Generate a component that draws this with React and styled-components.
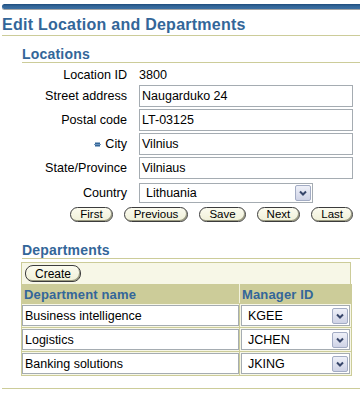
import React from 'react';
import styled, { createGlobalStyle } from 'styled-components';

const Global = createGlobalStyle`
  html, body { margin: 0; padding: 0; background: #ffffff; }
  body { font-family: "Liberation Sans", Arial, sans-serif; color: #000; }
  * { box-sizing: border-box; }
`;

const Page = styled.div`
  width: 360px;
  height: 394px;
  overflow: hidden;
  padding-top: 4px;
`;

const Brand = styled.div`
  margin-left: 2px;
  height: 5px;
  background: linear-gradient(#1e4c7c, #336699 45%, #3b6fa2);
  border-radius: 3px 0 0 3px;
  box-shadow: 0 1px 0 #a4a4a4;
`;

const Title = styled.h1`
  margin: 6px 0 0 2px;
  font-size: 16px;
  line-height: 20px;
  font-weight: bold;
  color: #336699;
  letter-spacing: 0.25px;
  white-space: nowrap;
  border-bottom: 1px solid #cccc99;
`;

const SectionHeader = styled.h2`
  margin: ${p => p.$top}px 0 0 22px;
  font-size: 14px;
  line-height: 16px;
  font-weight: bold;
  color: #336699;
  letter-spacing: 0.2px;
  border-bottom: 1px solid #cccc99;
`;

const Form = styled.div`
  display: grid;
  grid-template-columns: 127px 214px;
  column-gap: 12px;
  row-gap: 2px;
  margin-top: 4px;
  align-items: center;
`;

const Label = styled.div`
  display: flex;
  justify-content: flex-end;
  align-items: center;
  gap: 4px;
  font-size: 12.6px;
  height: ${p => p.$h || 22}px;
  margin-top: ${p => p.$mt || 0}px;
  white-space: nowrap;
`;

const Value = styled.div`
  font-size: 12.6px;
  height: ${p => p.$h || 22}px;
  display: flex;
  align-items: center;
`;

const TextInput = styled.div`
  width: 100%;
  height: ${p => p.$h || 22}px;
  border: 1px solid #a5acb2;
  background: #fff;
  padding: 0 2px;
  font-size: 12.5px;
  display: flex;
  align-items: center;
  white-space: nowrap;
`;

const Select = styled.div`
  width: ${p => p.$w};
  height: ${p => p.$h}px;
  border: 1px solid #a5acb2;
  background: #fff;
  display: flex;
  align-items: center;
  justify-content: space-between;
  padding-left: 6px;
  padding-right: 1px;
  font-size: 12.5px;
  margin-top: ${p => p.$mt || 0}px;
`;

const ArrowBox = styled.span`
  width: 16px;
  height: 16px;
  border: 1px solid #a3acc4;
  border-radius: 2px;
  background: linear-gradient(#eef0f8, #cfd3e6);
  display: flex;
  align-items: center;
  justify-content: center;
`;

const Arrow = () => (
  <ArrowBox>
    <svg width="10" height="8" viewBox="0 0 10 8">
      <path d="M2 2.5 L5 5.5 L8 2.5" fill="none" stroke="#37466a" strokeWidth="2" />
    </svg>
  </ArrowBox>
);

const ButtonRow = styled.div`
  grid-column: 1 / span 2;
  display: flex;
  justify-content: flex-end;
  gap: 11px;
  margin-top: 2px;
`;

const Btn = styled.button`
  height: ${p => (p.$tall ? 17 : 15)}px;
  padding: 0 9px;
  border: 1px solid #3c3c3c;
  border-radius: 8px;
  background: linear-gradient(#fbfbef, #f0f0d8);
  box-shadow: inset -1px -1px 0 #9a9a80;
  font-family: "Liberation Sans", Arial, sans-serif;
  font-size: ${p => (p.$tall ? 12 : 11.5)}px;
  line-height: 1;
  color: #000;
  display: flex;
  align-items: center;
`;

const Required = () => (
  <svg width="7" height="5" viewBox="0 0 7 5">
    <rect x="1" y="0.5" width="5" height="4" fill="#336699" />
    <rect x="0" y="2" width="7" height="1" fill="#6f95bd" />
  </svg>
);

const DeptBox = styled.div`
  margin: 3px 0 0 21px;
  width: 330px;
`;

const ControlBar = styled.div`
  border: 1px solid #cccc99;
  border-bottom: none;
  background: #f7f7e7;
  padding: 2px 3px 2px;
  display: flex;
`;

const Table = styled.table`
  border-collapse: collapse;
  width: 330px;
  table-layout: fixed;
`;

const Th = styled.th`
  background: #cccc99;
  color: #336699;
  font-size: 13px;
  font-weight: bold;
  text-align: left;
  height: 19px;
  padding: 0 2px;
  border: 1px solid #cccc99;
  border-right: ${p => (p.$divider ? '1px solid #f3f3de' : '1px solid #cccc99')};
  white-space: nowrap;
  letter-spacing: 0.15px;
`;

const Td = styled.td`
  background: #f7f7e7;
  border: 1px solid #cccc99;
  padding: 1px ${p => p.$px}px;
`;

const Footer = styled.div`
  margin: 12px 0 0 2px;
  border-top: 1px solid #cccc99;
`;

const rows = [
  { name: 'Business intelligence', mgr: 'KGEE' },
  { name: 'Logistics', mgr: 'JCHEN' },
  { name: 'Banking solutions', mgr: 'JKING' },
];

export default function App() {
  return (
    <Page>
      <Global />
      <Brand />
      <Title>Edit Location and Departments</Title>
      <SectionHeader $top={10}>Locations</SectionHeader>
      <Form>
        <Label $h={16}>Location ID</Label>
        <Value $h={16}>3800</Value>
        <Label>Street address</Label>
        <TextInput>Naugarduko 24</TextInput>
        <Label>Postal code</Label>
        <TextInput>LT-03125</TextInput>
        <Label><Required />City</Label>
        <TextInput>Vilnius</TextInput>
        <Label>State/Province</Label>
        <TextInput>Vilniaus</TextInput>
        <Label $h={20} $mt={2}>Country</Label>
        <Select $w="174px" $h={20} $mt={2}>Lithuania<Arrow /></Select>
        <ButtonRow>
          <Btn>First</Btn>
          <Btn>Previous</Btn>
          <Btn>Save</Btn>
          <Btn>Next</Btn>
          <Btn>Last</Btn>
        </ButtonRow>
      </Form>
      <SectionHeader $top={20}>Departments</SectionHeader>
      <DeptBox>
        <ControlBar>
          <Btn $tall>Create</Btn>
        </ControlBar>
        <Table>
          <colgroup>
            <col style={{ width: 218 }} />
            <col style={{ width: 112 }} />
          </colgroup>
          <thead>
            <tr>
              <Th $divider>Department name</Th>
              <Th>Manager ID</Th>
            </tr>
          </thead>
          <tbody>
            {rows.map(r => (
              <tr key={r.name}>
                <Td $px={0}><TextInput $h={21}>{r.name}</TextInput></Td>
                <Td $px={1}><Select $w="100%" $h={21}>{r.mgr}<Arrow /></Select></Td>
              </tr>
            ))}
          </tbody>
        </Table>
      </DeptBox>
      <Footer />
    </Page>
  );
}
